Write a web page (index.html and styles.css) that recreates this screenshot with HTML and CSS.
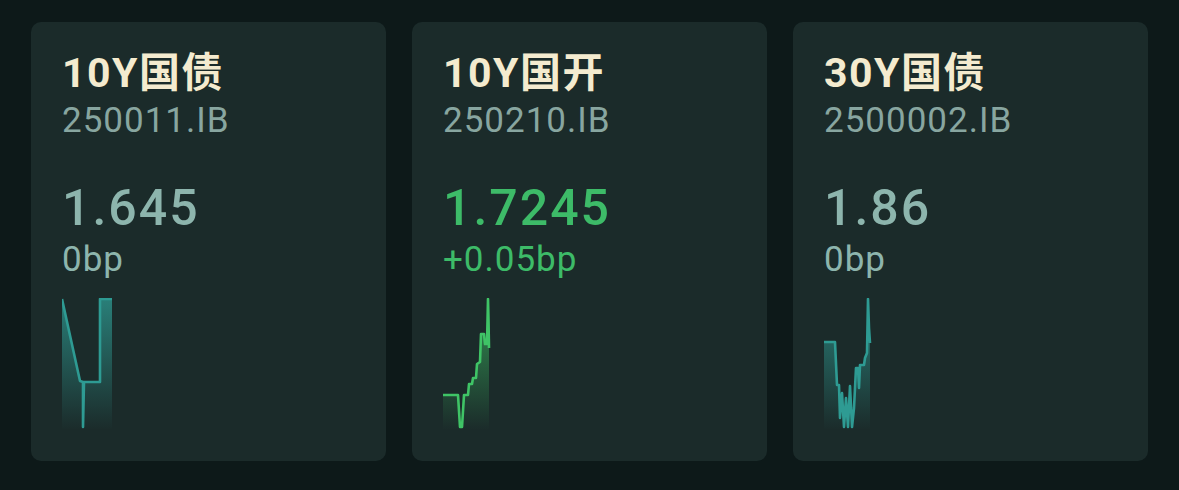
FILE: index.html
```html
<!DOCTYPE html>
<html lang="zh-CN">
<head>
    <meta charset="UTF-8">
    <meta name="viewport" content="width=device-width, initial-scale=1.0">
    <title>债券行情</title>
    <link rel="stylesheet" href="styles.css">
</head>
<body>
    <div id="quote-list">
        <div class="quote-card">
            <div class="bond-name">10Y国债</div>
            <div class="bond-code">250011.IB</div>
            <div class="bond-yield flat">1.645</div>
            <div class="bond-change flat">0bp</div>
            <svg class="spark" width="50" height="132" viewBox="0 0 50 132">
                <defs>
                    <linearGradient id="fill-a" x1="0" y1="0" x2="0" y2="1">
                        <stop offset="0" stop-color="#2e9b93" stop-opacity="0.75"/>
                        <stop offset="1" stop-color="#2e9b93" stop-opacity="0"/>
                    </linearGradient>
                </defs>
                <polygon fill="url(#fill-a)" points="0,1 18,83 21,84 21,129 22,84 38,84 38,1 50,1 50,132 0,132"/>
                <polyline class="line teal" points="0,1 18,83 21,84 21,129 22,84 38,84 38,1 50,1"/>
            </svg>
        </div>
        <div class="quote-card">
            <div class="bond-name">10Y国开</div>
            <div class="bond-code">250210.IB</div>
            <div class="bond-yield up">1.7245</div>
            <div class="bond-change up">+0.05bp</div>
            <svg class="spark" width="50" height="132" viewBox="0 0 50 132">
                <defs>
                    <linearGradient id="fill-b" x1="0" y1="0" x2="0" y2="1">
                        <stop offset="0" stop-color="#3cbf63" stop-opacity="0.7"/>
                        <stop offset="1" stop-color="#3cbf63" stop-opacity="0"/>
                    </linearGradient>
                </defs>
                <polygon fill="url(#fill-b)" points="0,97 15,97 17,129 19,129 20,113 21,97 25,97 26,86 29,86 30,80 33,80 34,66 37,64 38,36 41,36 42,46 44,46 45,1 45.5,22 46,50 46,132 0,132"/>
                <polyline class="line green" points="0,97 15,97 17,129 19,129 20,113 21,97 25,97 26,86 29,86 30,80 33,80 34,66 37,64 38,36 41,36 42,46 44,46 45,1 45.5,22 46,50"/>
            </svg>
        </div>
        <div class="quote-card">
            <div class="bond-name">30Y国债</div>
            <div class="bond-code">2500002.IB</div>
            <div class="bond-yield flat">1.86</div>
            <div class="bond-change flat">0bp</div>
            <svg class="spark" width="50" height="132" viewBox="0 0 50 132">
                <defs>
                    <linearGradient id="fill-c" x1="0" y1="0" x2="0" y2="1">
                        <stop offset="0" stop-color="#2e9b93" stop-opacity="0.75"/>
                        <stop offset="1" stop-color="#2e9b93" stop-opacity="0"/>
                    </linearGradient>
                </defs>
                <polygon fill="url(#fill-c)" points="0,44 11,44 13,87 15,87 16,120 18,95 20,129 22,100 24,129 26,88 28,129 30,110 32,70 34,70 35,90 36,67 40,67 41,60 43,55 44,1 45,30 46,45 46,132 0,132"/>
                <polyline class="line teal" points="0,44 11,44 13,87 15,87 16,120 18,95 20,129 22,100 24,129 26,88 28,129 30,110 32,70 34,70 35,90 36,67 40,67 41,60 43,55 44,1 45,30 46,45"/>
            </svg>
        </div>
    </div>
</body>
</html>
```

FILE: styles.css
```css
body {
    margin: 0;
    background-color: #0d1919;
    font-family: Roboto, "Noto Sans CJK SC", sans-serif;
}
#quote-list {
    display: flex;
    gap: 26px;
    padding: 22px 0 0 31px;
}
.quote-card {
    width: 355px;
    height: 439px;
    box-sizing: border-box;
    padding: 27px 31px 0;
    background-color: #1b2b2a;
    border-radius: 10px;
}
.bond-name {
    font-size: 41px;
    line-height: 48px;
    font-weight: 700;
    letter-spacing: 1.5px;
    color: #f4ebcf;
}
.bond-code {
    margin-top: 3px;
    font-size: 35px;
    line-height: 42px;
    letter-spacing: 1px;
    color: #88a6a0;
}
.bond-yield {
    margin-top: 36px;
    font-size: 50px;
    line-height: 60px;
    font-weight: 500;
    letter-spacing: 2px;
}
.bond-change {
    margin-top: 1px;
    font-size: 35px;
    line-height: 42px;
    letter-spacing: 1px;
}
.flat {
    color: #8db5ad;
}
.up {
    color: #3dbb68;
}
.spark {
    display: block;
    margin: 17px 0 0 0;
}
.line {
    fill: none;
    stroke-width: 2.6;
    stroke-linejoin: round;
}
.teal {
    stroke: #2e9b93;
}
.green {
    stroke: #3fc466;
}
```
